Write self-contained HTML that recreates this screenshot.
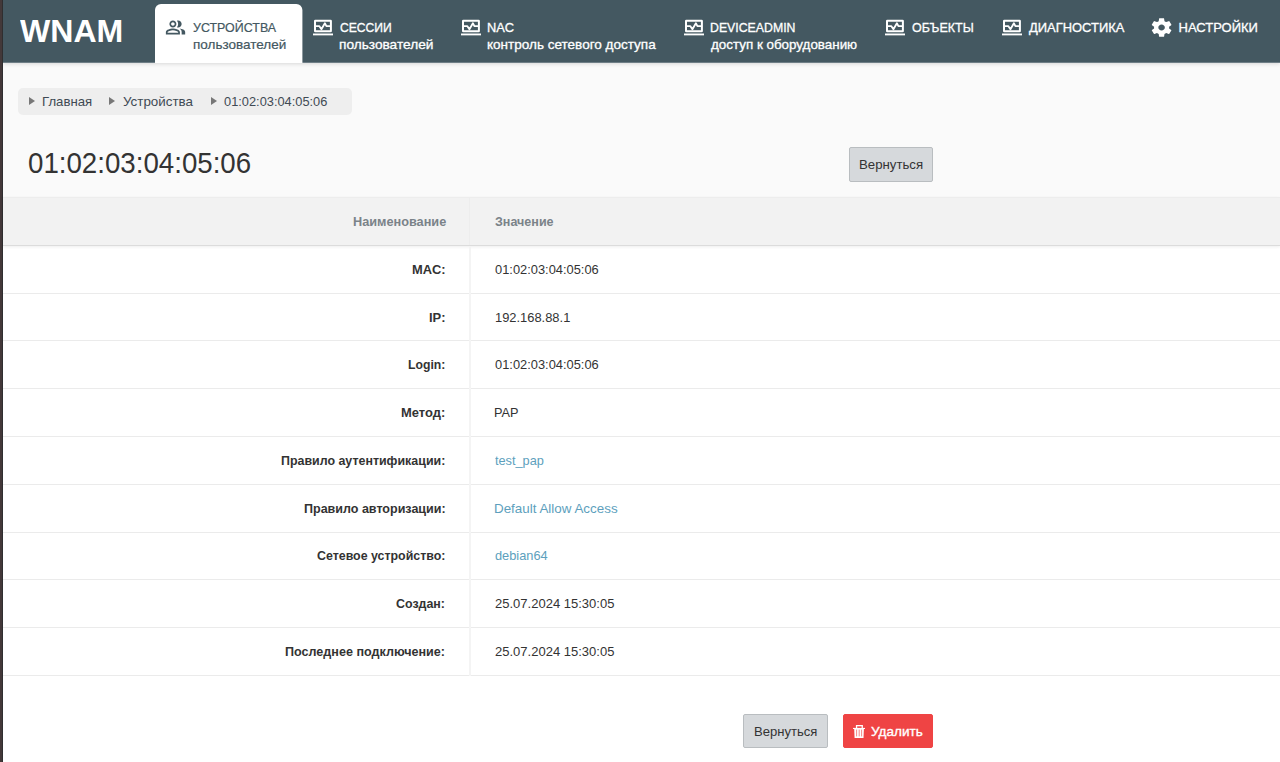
<!DOCTYPE html>
<html lang="ru">
<head>
<meta charset="utf-8">
<title>WNAM</title>
<style>
*{box-sizing:border-box;margin:0;padding:0}
html,body{width:1280px;height:762px;overflow:hidden}
body{position:relative;background:#fff;font-family:"Liberation Sans",sans-serif;font-size:13px;color:#333}
.abs{position:absolute;white-space:nowrap}
.x{transform-origin:0 0;line-height:1.2}
#stripe{left:0;top:0;width:3px;height:762px;background:linear-gradient(90deg,#433839 0,#433839 2px,#2f2e30 2px,#2f2e30 3px)}
#top{left:3px;top:0;width:1277px;height:197px;background:#fafafa}
#hdr{left:3px;top:0;width:1277px;height:63px;background:linear-gradient(#445861 0,#445861 62px,#6e7d85 62px,#6f7f87 63px);box-shadow:0 1px 4px rgba(0,0,0,.14)}
.logo{font-size:32px;font-weight:bold;color:#fff}
.t{font-size:13px;color:#fff;-webkit-text-stroke:.3px #fff}
.t.d{color:#445861;-webkit-text-stroke:.2px #445861}
svg.i{position:absolute;display:block;overflow:visible}
#bc{left:18px;top:88px;width:334px;height:27px;background:#eeeeee;border-radius:5px}
.bct{font-size:13px;color:#3f4a54}
.tri{width:0;height:0;border-left:6px solid #777;border-top:4px solid transparent;border-bottom:4px solid transparent;top:97px}
.title{font-size:29.5px;color:#333}
.btn{height:35px;border:1px solid #b9bdc0;background:#d6d9dc;border-radius:2px}
.bt{font-size:13px;color:#333}
.bt.w{color:#fff;-webkit-text-stroke:.35px #fff}
#thead{left:3px;top:197px;width:1277px;height:49px;background:#f2f2f2;border-top:1px solid #ededed;border-bottom:1px solid #dcdcdc;box-shadow:0 1px 3px rgba(0,0,0,.07)}
.ln{left:3px;width:1277px;height:1px;background:#ebebeb}
#vsep{left:469px;top:246px;width:2px;height:430px;background:#f4f4f4}
#vsep2{left:469px;top:198px;width:1px;height:47px;background:#ededed}
.k{font-weight:bold;font-size:13px;color:#333}
.v{font-size:13px;color:#333}
.v.l{color:#5d9fbd}
.h{color:#7b8389;font-weight:bold;font-size:13px}
header,nav,main,section,a,h1,[role]{display:contents;color:inherit;text-decoration:none;font:inherit}
.abs.abs{display:block}
</style>
</head>
<body>
<div class="abs" id="top"></div>
<header>
<div class="abs" id="hdr"></div>
<a href="#"><span class="abs x logo" style="left:19.80px;top:12px;transform:scaleX(1.0020)">WNAM</span></a>
<nav>
<a href="#"><svg class="i" style="left:155px;top:4px" width="148" height="59" viewBox="0 0 148 59"><path d="M0 59V6A6 6 0 0 1 6 0H141.400A6 6 0 0 1 147.400 6V59Z" fill="#fff"/></svg>
<svg class="i" style="left:165.1px;top:16.8px" width="21.05" height="21.05" viewBox="0 0 24 24"><path fill="#445861" d="M16.67 13.13C18.04 14.06 19 15.32 19 17v3h4v-3c0-2.18-3.57-3.47-6.33-3.87zM15 12c2.21 0 4-1.79 4-4s-1.79-4-4-4c-.47 0-.91.1-1.33.24C14.5 5.27 15 6.58 15 8s-.5 2.730-1.33 3.760c.42.14.86.24 1.33.24zM9 12c2.21 0 4-1.79 4-4s-1.79-4-4-4-4 1.790-4 4 1.790 4 4 4zm0-6c1.100 0 2 .9 2 2s-.9 2-2 2-2-.9-2-2 .9-2 2-2zM9 13c-2.670 0-8 1.340-8 4v3h16v-3c0-2.660-5.330-4-8-4zm6 5H3v-.99C3.200 16.290 6.300 15 9 15s5.800 1.290 6 2v1z"/></svg><span class="abs x t d" style="left:192.50px;top:20px;transform:scaleX(0.9569)">УСТРОЙСТВА</span><span class="abs x t d" style="left:192.50px;top:37px;transform:scaleX(1.0393)">пользователей</span></a>
<a href="#"><svg class="i" style="left:312.10px;top:18px" width="22" height="19" viewBox="0 0 22 19"><rect x="3" y="2.75" width="15.9" height="10.6" rx="0.3" fill="none" stroke="#fff" stroke-width="2"/><rect x="1" y="15.5" width="20" height="1.85" fill="#fff"/><path d="M3.6 8.2H7.4L9.4 11.2L12.9 5.2L14.4 8.2H18.4" fill="none" stroke="#fff" stroke-width="1.8" stroke-linejoin="round"/></svg><span class="abs x t" style="left:340.00px;top:20px;transform:scaleX(0.9318)">СЕССИИ</span><span class="abs x t" style="left:338.95px;top:37px;transform:scaleX(1.0511)">пользователей</span></a>
<a href="#"><svg class="i" style="left:459.60px;top:18px" width="22" height="19" viewBox="0 0 22 19"><rect x="3" y="2.75" width="15.9" height="10.6" rx="0.3" fill="none" stroke="#fff" stroke-width="2"/><rect x="1" y="15.5" width="20" height="1.85" fill="#fff"/><path d="M3.6 8.2H7.4L9.4 11.2L12.9 5.2L14.4 8.2H18.4" fill="none" stroke="#fff" stroke-width="1.8" stroke-linejoin="round"/></svg><span class="abs x t" style="left:487.31px;top:20px;transform:scaleX(0.9885)">NAC</span><span class="abs x t" style="left:487.26px;top:37px;transform:scaleX(1.0404)">контроль сетевого доступа</span></a>
<a href="#"><svg class="i" style="left:682.85px;top:18px" width="22" height="19" viewBox="0 0 22 19"><rect x="3" y="2.75" width="15.9" height="10.6" rx="0.3" fill="none" stroke="#fff" stroke-width="2"/><rect x="1" y="15.5" width="20" height="1.85" fill="#fff"/><path d="M3.6 8.2H7.4L9.4 11.2L12.9 5.2L14.4 8.2H18.4" fill="none" stroke="#fff" stroke-width="1.8" stroke-linejoin="round"/></svg><span class="abs x t" style="left:709.80px;top:20px;transform:scaleX(0.9466)">DEVICEADMIN</span><span class="abs x t" style="left:710.75px;top:37px;transform:scaleX(1.0299)">доступ к оборудованию</span></a>
<a href="#"><svg class="i" style="left:884.10px;top:18px" width="22" height="19" viewBox="0 0 22 19"><rect x="3" y="2.75" width="15.9" height="10.6" rx="0.3" fill="none" stroke="#fff" stroke-width="2"/><rect x="1" y="15.5" width="20" height="1.85" fill="#fff"/><path d="M3.6 8.2H7.4L9.4 11.2L12.9 5.2L14.4 8.2H18.4" fill="none" stroke="#fff" stroke-width="1.8" stroke-linejoin="round"/></svg><span class="abs x t" style="left:912.00px;top:20px;transform:scaleX(0.9609)">ОБЪЕКТЫ</span></a>
<a href="#"><svg class="i" style="left:1000.85px;top:18px" width="22" height="19" viewBox="0 0 22 19"><rect x="3" y="2.75" width="15.9" height="10.6" rx="0.3" fill="none" stroke="#fff" stroke-width="2"/><rect x="1" y="15.5" width="20" height="1.85" fill="#fff"/><path d="M3.6 8.2H7.4L9.4 11.2L12.9 5.2L14.4 8.2H18.4" fill="none" stroke="#fff" stroke-width="1.8" stroke-linejoin="round"/></svg><span class="abs x t" style="left:1028.75px;top:20px;transform:scaleX(0.9948)">ДИАГНОСТИКА</span></a>
<a href="#"><svg class="i" style="left:1149.1px;top:15.75px" width="25.2" height="23.2" viewBox="0 0 24 24" preserveAspectRatio="none"><path fill="#fff" d="M19.14 12.94c.04-.3.06-.61.06-.94 0-.32-.02-.64-.07-.94l2.03-1.58c.18-.14.23-.41.12-.61l-1.92-3.32c-.12-.22-.37-.29-.59-.22l-2.39.96c-.5-.38-1.03-.7-1.62-.94l-.36-2.54c-.04-.24-.24-.41-.48-.41h-3.84c-.24 0-.43.17-.47.41l-.36 2.54c-.59.24-1.13.57-1.62.94l-2.39-.96c-.22-.08-.47 0-.59.22L2.74 8.87c-.12.21-.08.47.12.61l2.03 1.58c-.05.3-.09.63-.09.94s.02.64.07.94l-2.03 1.58c-.18.14-.23.41-.12.61l1.92 3.32c.12.22.37.29.59.22l2.39-.96c.5.38 1.03.7 1.62.94l.36 2.54c.05.24.24.41.48.41h3.84c.24 0 .44-.17.47-.41l.36-2.54c.59-.24 1.13-.56 1.62-.94l2.39.96c.22.08.47 0 .59-.22l1.92-3.32c.12-.22.07-.47-.12-.61l-2.01-1.58zM12 15.1c-1.710 0-3.100-1.390-3.100-3.100s1.390-3.100 3.100-3.100 3.100 1.390 3.100 3.100-1.390 3.100-3.100 3.100z"/></svg><span class="abs x t" style="left:1178.50px;top:20px;transform:scaleX(1.0000)">НАСТРОЙКИ</span></a>
</nav>
</header>
<div class="abs" id="stripe"></div>
<main>
<nav>
<div class="abs" id="bc"></div>
<a href="#"><i class="abs tri" style="left:29.2px"></i><span class="abs x bct" style="left:41.99px;top:94px;transform:scaleX(1.0125)">Главная</span></a>
<a href="#"><i class="abs tri" style="left:109.2px"></i><span class="abs x bct" style="left:123.20px;top:94px;transform:scaleX(1.0279)">Устройства</span></a>
<a href="#"><i class="abs tri" style="left:210.7px"></i><span class="abs x bct" style="left:223.90px;top:94px;transform:scaleX(0.9857)">01:02:03:04:05:06</span></a>
</nav>
<h1><span class="abs x title" style="left:27.86px;top:145px;transform:scaleX(0.9381)">01:02:03:04:05:06</span></h1>
<a href="#" role="button"><i class="abs btn" style="left:849px;top:147px;width:84px"></i><span class="abs x bt" style="left:858.98px;top:157px;transform:scaleX(1.0161)">Вернуться</span></a>
<section role="table">
<div role="row"><i class="abs" id="thead"></i><span class="abs x h" style="left:353.22px;top:214px;transform:scaleX(0.9777)">Наименование</span><span class="abs x h" style="left:494.90px;top:214px;transform:scaleX(0.9639)">Значение</span></div>
<div role="row"><span class="abs x k" style="left:412.31px;top:262px;transform:scaleX(0.9906)">MAC:</span><span class="abs x v" style="left:494.90px;top:262px;transform:scaleX(0.9895)">01:02:03:04:05:06</span><i class="abs ln" style="top:293px"></i></div>
<div role="row"><span class="abs x k" style="left:428.81px;top:310px;transform:scaleX(0.9933)">IP:</span><span class="abs x v" style="left:495.21px;top:310px;transform:scaleX(0.9920)">192.168.88.1</span><i class="abs ln" style="top:340px"></i></div>
<div role="row"><span class="abs x k" style="left:408.06px;top:357px;transform:scaleX(0.9395)">Login:</span><span class="abs x v" style="left:494.90px;top:357px;transform:scaleX(0.9895)">01:02:03:04:05:06</span><i class="abs ln" style="top:388px"></i></div>
<div role="row"><span class="abs x k" style="left:400.90px;top:405px;transform:scaleX(0.9953)">Метод:</span><span class="abs x v" style="left:494.42px;top:405px;transform:scaleX(0.9792)">PAP</span><i class="abs ln" style="top:436px"></i></div>
<div role="row"><span class="abs x k" style="left:281.34px;top:453px;transform:scaleX(0.9553)">Правило аутентификации:</span><a href="#"><span class="abs x v l" style="left:495.40px;top:453px;transform:scaleX(0.9800)">test_pap</span></a><i class="abs ln" style="top:484px"></i></div>
<div role="row"><span class="abs x k" style="left:304.14px;top:501px;transform:scaleX(0.9628)">Правило авторизации:</span><a href="#"><span class="abs x v l" style="left:494.37px;top:501px;transform:scaleX(1.0303)">Default Allow Access</span></a><i class="abs ln" style="top:532px"></i></div>
<div role="row"><span class="abs x k" style="left:317.00px;top:548px;transform:scaleX(0.9530)">Сетевое устройство:</span><a href="#"><span class="abs x v l" style="left:495.40px;top:548px;transform:scaleX(0.9852)">debian64</span></a><i class="abs ln" style="top:579px"></i></div>
<div role="row"><span class="abs x k" style="left:396.00px;top:596px;transform:scaleX(0.9549)">Создан:</span><span class="abs x v" style="left:495.40px;top:596px;transform:scaleX(1.0008)">25.07.2024 15:30:05</span><i class="abs ln" style="top:627px"></i></div>
<div role="row"><span class="abs x k" style="left:285.13px;top:644px;transform:scaleX(0.9671)">Последнее подключение:</span><span class="abs x v" style="left:495.40px;top:644px;transform:scaleX(1.0008)">25.07.2024 15:30:05</span><i class="abs ln" style="top:675px"></i></div>
<i class="abs" id="vsep"></i>
<i class="abs" id="vsep2"></i>
</section>
<a href="#" role="button"><i class="abs btn" style="left:743px;top:714px;width:85px;height:34px"></i><span class="abs x bt" style="left:753.90px;top:724px;transform:scaleX(1.0048)">Вернуться</span></a>
<a href="#" role="button"><i class="abs btn" style="left:843px;top:714px;width:90px;height:34px;background:#ef4444;border-color:#ef4444"></i><svg class="i" style="left:852px;top:724px" width="14" height="15" viewBox="0 0 14 15"><rect x="4.55" y="1.65" width="5.7" height="3" fill="none" stroke="#fff" stroke-width="1.3"/><rect x="1" y="3.9" width="12" height="1.1" fill="#fff"/><path d="M2.2 5H11.9L11.5 14H2.6Z" fill="#fff"/><path d="M4.6 5.6V12.4M7.2 5.6V12.4M9.6 5.6V12.4" stroke="#ef4444" stroke-opacity=".75" stroke-width=".85" fill="none"/></svg><span class="abs x bt w" style="left:870.96px;top:724px;transform:scaleX(1.0417)">Удалить</span></a>
</main>
</body>
</html>
